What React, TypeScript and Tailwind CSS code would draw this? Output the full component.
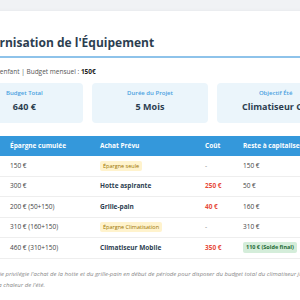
import React from "react";

const rows = [
  { m: "Mois 1", e: "150 €", a: { t: "Épargne seule", badge: true }, c: "-", r: "150 €" },
  { m: "Mois 2", e: "300 €", a: { t: "Hotte aspirante", badge: false }, c: "250 €", r: "50 €" },
  { m: "Mois 3", e: "200 € (50+150)", a: { t: "Grille-pain", badge: false }, c: "40 €", r: "160 €" },
  { m: "Mois 4", e: "310 € (160+150)", a: { t: "Épargne Climatisation", badge: true }, c: "-", r: "310 €" },
  { m: "Mois 5", e: "460 € (310+150)", a: { t: "Climatiseur Mobile", badge: false }, c: "350 €", r: "110 € (Solde final)", final: true },
];

export default function App() {
  return (
    <div
      className="w-[300px] h-[300px] overflow-hidden bg-[#f0f2f5] flex justify-center pt-[11px]"
      style={{ fontFamily: '"Open Sans", "Noto Sans", sans-serif' }}
    >
      <div className="w-[400px] shrink-0 bg-white rounded-[6px] shadow-[0_1px_4px_rgba(0,0,0,0.08)] px-[16px] pt-[24px] pb-[20px]">
        <div className="border-b-2 border-[#8ec3ea] pb-[5px]">
          <h1 className="text-[12px] leading-[16px] font-bold text-[#2c3e50] whitespace-nowrap">
            Modernisation de l'Équipement
          </h1>
        </div>
        <p className="mt-[9px] text-[6.5px] leading-[9px] text-[#555] whitespace-nowrap">
          Couple + 1 enfant | Budget mensuel : <span className="font-bold text-[#222]">150€</span>
        </p>

        <div className="mt-[7px] grid grid-cols-3 gap-[9px]">
          {[
            ["Budget Total", "640 €"],
            ["Durée du Projet", "5 Mois"],
            ["Objectif Été", "Climatiseur OK"],
          ].map(([l, v]) => (
            <div key={l} className="bg-[#ebf5fb] rounded-[4px] h-[40px] pt-[6px] flex flex-col items-center">
              <div className="text-[6px] leading-[8px] font-semibold text-[#4a9fe0] whitespace-nowrap">{l}</div>
              <div className="mt-[4px] text-[9px] leading-[12px] font-bold text-[#2c3e50] whitespace-nowrap">{v}</div>
            </div>
          ))}
        </div>

        <div className="mt-[13px]">
          <div className="grid grid-cols-[36px_90px_105px_38px_99px] bg-[#3498db] h-[20px] items-center text-white font-bold text-[6.5px] rounded-t-[3px]">
            <div className="px-[8px] whitespace-nowrap">Mois</div>
            <div className="px-[8px] whitespace-nowrap">Épargne cumulée</div>
            <div className="px-[8px] whitespace-nowrap">Achat Prévu</div>
            <div className="px-[8px] whitespace-nowrap">Coût</div>
            <div className="px-[8px] whitespace-nowrap">Reste à capitaliser</div>
          </div>
          {rows.map((r) => (
            <div
              key={r.m}
              className="grid grid-cols-[36px_90px_105px_38px_99px] h-[20.5px] items-center border-b border-[#eeeeee] text-[6.5px] text-[#444]"
            >
              <div className="px-[8px] whitespace-nowrap font-semibold">{r.m}</div>
              <div className="px-[8px] whitespace-nowrap">{r.e}</div>
              <div className="px-[8px] whitespace-nowrap">
                {r.a.badge ? (
                  <span className="inline-block bg-[#fff3cd] text-[#9a7300] text-[5.5px] leading-[10px] px-[3px] rounded-[2px]">
                    {r.a.t}
                  </span>
                ) : (
                  <span className="font-bold text-[#2c3e50]">{r.a.t}</span>
                )}
              </div>
              <div className={"px-[8px] whitespace-nowrap " + (r.c === "-" ? "text-[#888]" : "font-bold text-[#e74c3c]")}>
                {r.c}
              </div>
              <div className="px-[8px] whitespace-nowrap">
                {r.final ? (
                  <span className="inline-block bg-[#d4edda] text-[#1e6b34] font-bold text-[5.5px] leading-[11px] px-[3px] rounded-[2px]">
                    {r.r}
                  </span>
                ) : (
                  r.r
                )}
              </div>
            </div>
          ))}
        </div>

        <p className="mt-[10px] text-[6px] leading-[11px] italic text-[#888]">
          Cette stratégie privilégie l'achat de la hotte et du grille-pain en début de période pour disposer du budget total du climatiseur jusqu'à l'arrivée de la chaleur de l'été.
        </p>
      </div>
    </div>
  );
}
